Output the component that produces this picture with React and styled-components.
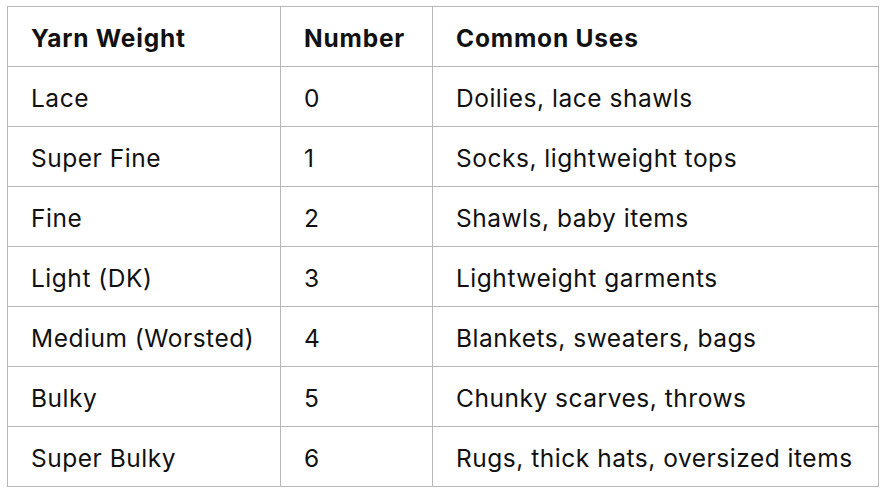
import React from "react";
import styled, { createGlobalStyle } from "styled-components";

const Global = createGlobalStyle`
  html, body { margin: 0; padding: 0; background: #fff; }
  body { font-family: Inter, "Noto Sans", "Liberation Sans", sans-serif; color: #111; }
`;

const Page = styled.div`
  padding: 6px 0 0 7px;
`;

const Table = styled.table`
  border-collapse: collapse;
  table-layout: fixed;
  width: 871px;
`;

const Col = styled.col`
  width: ${(p) => p.$w}px;
`;

const Cell = styled.td`
  border: 1px solid #b8b8b8;
  height: 55px;
  padding: 4px 0 0 23px;
  font-size: 24.5px;
  font-weight: ${(p) => (p.$head ? 700 : 400)};
  letter-spacing: ${(p) => (p.$head ? "0.8px" : "0.52px")};
  text-align: left;
  white-space: nowrap;
  vertical-align: middle;
  line-height: 1;
`;

const rows = [
  ["Lace", "0", "Doilies, lace shawls"],
  ["Super Fine", "1", "Socks, lightweight tops"],
  ["Fine", "2", "Shawls, baby items"],
  ["Light (DK)", "3", "Lightweight garments"],
  ["Medium (Worsted)", "4", "Blankets, sweaters, bags"],
  ["Bulky", "5", "Chunky scarves, throws"],
  ["Super Bulky", "6", "Rugs, thick hats, oversized items"],
];

export default function App() {
  return (
    <Page>
      <Global />
      <Table>
        <colgroup>
          <Col $w={273} />
          <Col $w={152} />
          <Col $w={446} />
        </colgroup>
        <thead>
          <tr>
            <Cell as="th" $head>Yarn Weight</Cell>
            <Cell as="th" $head>Number</Cell>
            <Cell as="th" $head>Common Uses</Cell>
          </tr>
        </thead>
        <tbody>
          {rows.map((r) => (
            <tr key={r[0]}>
              {r.map((c, i) => (
                <Cell key={i}>{c}</Cell>
              ))}
            </tr>
          ))}
        </tbody>
      </Table>
    </Page>
  );
}
